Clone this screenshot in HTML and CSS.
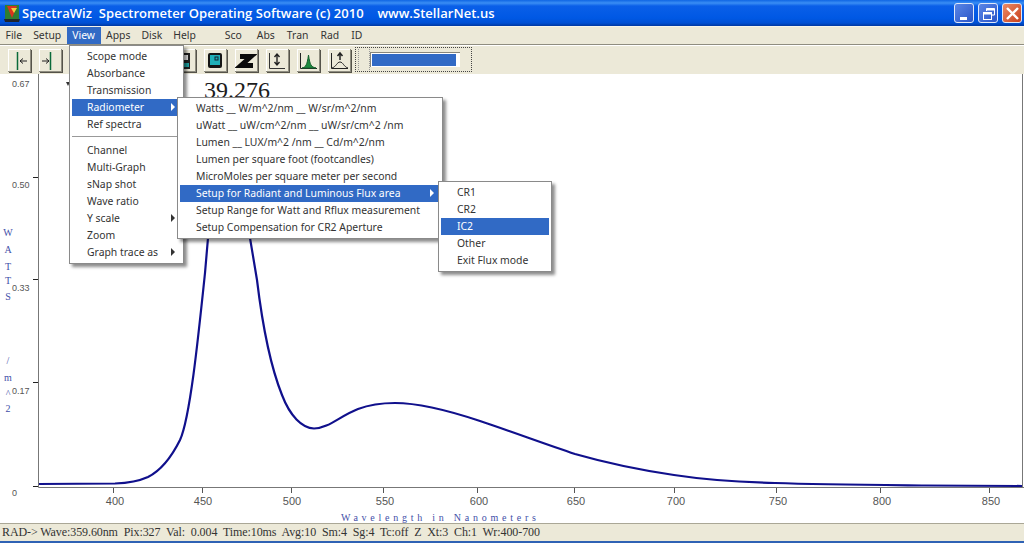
FILE: index.html
```html
<!doctype html>
<html lang="en">
    <head>
        <meta charset="utf-8">
        <meta name="viewport" content="width=device-width, initial-scale=1">
        <title>SpectraWiz</title>
        <link rel="stylesheet" href="styles.css">
    </head>
    <body>
        <div class="window">
            <header class="titlebar">
                <svg class="app-icon" width="18" height="19" viewBox="0 0 18 19">
                    <rect x="2" y="1" width="14" height="14" fill="#2f7d32"/>
                    <path d="M4 2 L14 2 L9 14 Z" fill="#d8331f"/>
                    <path d="M8 4 L14 4 L11 9 Z" fill="#f0d040"/>
                    <path d="M1 15 L17 15 L16 18 L2 18 Z" fill="#20242c"/>
                </svg>
                <span class="title-text">SpectraWiz  Spectrometer Operating Software (c) 2010    www.StellarNet.us</span>
                <div class="win-buttons">
                    <button class="win-btn">
                        <svg width="19" height="19" viewBox="0 0 19 19"><rect x="5" y="13" width="7" height="3" fill="#fff"/></svg>
                    </button>
                    <button class="win-btn">
                        <svg width="19" height="19" viewBox="0 0 19 19" fill="none" stroke="#fff" stroke-width="1"><path d="M7.5 7 V4.5 H15.5 V11 H13"/><path d="M7.5 5.5 H15.5" stroke-width="2"/><rect x="4.5" y="8.5" width="8" height="7"/><path d="M4.5 9.5 H12.5" stroke-width="2"/></svg>
                    </button>
                    <button class="win-btn close">
                        <svg width="19" height="19" viewBox="0 0 19 19" stroke="#fff" stroke-width="2.4"><path d="M4 4 L15 15 M15 4 L4 15"/></svg>
                    </button>
                </div>
            </header>

            <nav class="menubar">
                <span class="top-item">File</span>
                <span class="top-item">Setup</span>
                <span class="top-item active">View</span>
                <span class="top-item">Apps</span>
                <span class="top-item">Disk</span>
                <span class="top-item">Help</span>
                <span class="top-item sco">Sco</span>
                <span class="top-item">Abs</span>
                <span class="top-item">Tran</span>
                <span class="top-item">Rad</span>
                <span class="top-item">ID</span>
            </nav>

            <div class="toolbar">
                <button class="tool">
                    <svg width="22" height="22" viewBox="0 0 22 22" fill="none"><path d="M9.5 2 V20" stroke="#0a6a3a" stroke-width="1.5"/><path d="M19 11 H12 M15 8.5 L12 11 L15 13.5" stroke="#222"/></svg>
                </button>
                <button class="tool">
                    <svg width="22" height="22" viewBox="0 0 22 22" fill="none"><path d="M11.5 2 V20" stroke="#0a6a3a" stroke-width="1.5"/><path d="M3 11 H10 M7 8.5 L10 11 L7 13.5" stroke="#222"/></svg>
                </button>
                <button class="tool push">
                    <svg width="22" height="22" viewBox="0 0 22 22"><rect x="7" y="3" width="10" height="16" fill="#222"/><rect x="9" y="5" width="6" height="5" fill="#eee"/><rect x="8" y="13" width="8" height="4" fill="#2aa"/></svg>
                </button>
                <button class="tool">
                    <svg width="22" height="22" viewBox="0 0 22 22"><rect x="4" y="3" width="14" height="15" rx="2" fill="#151515"/><rect x="6" y="5" width="10" height="10" fill="#1fb0b8"/><rect x="11" y="7" width="3" height="3" fill="none" stroke="#123"/></svg>
                </button>
                <button class="tool">
                    <svg width="22" height="22" viewBox="0 0 22 22" fill="none" stroke="#0b0b0b" stroke-width="5"><path d="M5 6.5 H16 L6 15.5 H18"/></svg>
                </button>
                <button class="tool">
                    <svg width="22" height="22" viewBox="0 0 22 22" fill="none" stroke="#222"><path d="M3.5 3 V18.5 H19" stroke="#333"/><path d="M11 4 V15 M8.5 7 L11 4 L13.5 7 M8.5 12 L11 15 L13.5 12" stroke-width="1.4"/></svg>
                </button>
                <button class="tool">
                    <svg width="22" height="22" viewBox="0 0 22 22" fill="none"><path d="M3.5 3 V18.5 H20" stroke="#222"/><path d="M5 18 C9 17 10 15 11.5 5 C13 15 14 17 19 18 Z" fill="#1c8a3e" stroke="#14602c"/></svg>
                </button>
                <button class="tool">
                    <svg width="22" height="22" viewBox="0 0 22 22" fill="none" stroke="#222"><path d="M3.5 3 V18.5 H20"/><path d="M4 18 C8 17 9 12 12 12 C15 12 16 17 20 18"/><path d="M12 3 V10 M9.5 6 L12 3 L14.5 6" stroke-width="1.5"/></svg>
                </button>
                <div class="progress-band">
                    <span class="grip"></span>
                    <div class="progress-track"><div class="progress-fill"></div></div>
                </div>
            </div>

            <main class="plot">
                <svg class="chart" width="1024" height="449" viewBox="0 74 1024 449">
                    <g fill="none" stroke="#777" stroke-width="1">
                        <path d="M38.5 74 V487.5 H1024"/>
                        <path d="M1022.5 74 V487"/>
                    </g>
                    <path d="M33 177.5 H38 M33 279.5 H38 M33 382.5 H38 M33 486.5 H38" stroke="#222" fill="none"/>
                    <path d="M113.5 488 V493 M202.5 488 V493 M291.5 488 V493 M383.5 488 V493 M477.5 488 V493 M574.5 488 V493 M674.5 488 V493 M776.5 488 V493 M880.5 488 V493 M989.5 488 V493" stroke="#555" fill="none"/>
                    <path d="M66 82 L70 82 L68 86 Z" fill="#333"/>

                    <g class="y-label">
                        <text x="12" y="87">0.67</text>
                        <text x="12" y="188">0.50</text>
                        <text x="12" y="291">0.33</text>
                        <text x="12" y="394">0.17</text>
                        <text x="12" y="496">0</text>
                    </g>
                    <g class="x-label" text-anchor="middle">
                        <text x="115" y="505">400</text>
                        <text x="203" y="505">450</text>
                        <text x="292" y="505">500</text>
                        <text x="385" y="505">550</text>
                        <text x="479" y="505">600</text>
                        <text x="576" y="505">650</text>
                        <text x="676" y="505">700</text>
                        <text x="778" y="505">750</text>
                        <text x="882" y="505">800</text>
                        <text x="991" y="505">850</text>
                    </g>
                    <g class="axis-title" text-anchor="middle">
                        <text x="8" y="236">W</text>
                        <text x="8" y="253">A</text>
                        <text x="8" y="270">T</text>
                        <text x="8" y="284">T</text>
                        <text x="8" y="300">S</text>
                        <text x="8" y="364">/</text>
                        <text x="8" y="381">m</text>
                        <text x="8" y="397">^</text>
                        <text x="8" y="412">2</text>
                    </g>
                    <text class="axis-title wide" x="341" y="521">Wavelength in Nanometers</text>

                    <text class="reading" x="204" y="98">39.276</text>

                    <path class="trace" d="M39 484 L115 483.5 C128 483 138 481.5 148 477 C158 472 170 460 180 440 C190 418 198 340 205 273 L208 238 L218 120 L250 238 L257 280 C263 330 270 365 282 395 C290 416 302 428 314 428.5 C328 428.5 340 416 358 409 C370 404.5 382 403 395 403 C420 403 450 411 480 421 C510 431 545 444 575 454 C610 464 640 470 674 475 C700 479 735 482 775 483 C820 484.5 880 485 925 485.5 L1022 486"/>
                </svg>
            </main>

            <footer class="statusbar">
                <span class="status-text">RAD-&gt; Wave:359.60nm  Pix:327  Val:  0.004  Time:10ms  Avg:10  Sm:4  Sg:4  Tc:off  Z  Xt:3  Ch:1  Wr:400-700</span>
            </footer>
            <div class="bottom-edge"></div>
        </div>

        <div class="menu view-menu">
            <div class="item">Scope mode</div>
            <div class="item">Absorbance</div>
            <div class="item">Transmission</div>
            <div class="item selected has-sub">Radiometer</div>
            <div class="item">Ref spectra</div>
            <div class="separator"></div>
            <div class="item">Channel</div>
            <div class="item">Multi-Graph</div>
            <div class="item">sNap shot</div>
            <div class="item">Wave ratio</div>
            <div class="item has-sub">Y scale</div>
            <div class="item">Zoom</div>
            <div class="item has-sub">Graph trace as</div>
        </div>

        <div class="menu radio-menu">
            <div class="item">Watts __ W/m^2/nm __ W/sr/m^2/nm</div>
            <div class="item">uWatt __ uW/cm^2/nm __ uW/sr/cm^2 /nm</div>
            <div class="item">Lumen __ LUX/m^2 /nm __ Cd/m^2/nm</div>
            <div class="item">Lumen per square foot (footcandles)</div>
            <div class="item">MicroMoles per square meter per second</div>
            <div class="item selected has-sub">Setup for Radiant and Luminous Flux area</div>
            <div class="item">Setup Range for Watt and Rflux measurement</div>
            <div class="item">Setup Compensation for CR2 Aperture</div>
        </div>

        <div class="menu flux-menu">
            <div class="item">CR1</div>
            <div class="item">CR2</div>
            <div class="item selected">IC2</div>
            <div class="item">Other</div>
            <div class="item">Exit Flux mode</div>
        </div>
    </body>
</html>
```

FILE: styles.css
```css
html {
    font-size: 10.4px;
    font-family: "Noto Sans", sans-serif;
}
body {
    margin: 0;
    width: 1024px;
    height: 543px;
    overflow: hidden;
    color: #333;
    background-color: #ece9d8;
}
.window {
    display: flex;
    flex-direction: column;
    height: 543px;
}

.titlebar {
    display: flex;
    align-items: center;
    height: 26px;
    padding: 0 2px 0 3px;
    box-sizing: border-box;
    background: linear-gradient(#0f66e4 0, #3a8ef4 3px, #0a5fe8 6px, #0058e4 18px, #0050d4 23px, #0038a0 26px);
}
.app-icon {
    flex-shrink: 0;
}
.title-text {
    margin-left: 1px;
    color: #fff;
    font-family: "Open Sans", sans-serif;
    font-size: 13px;
    font-weight: 600;
    letter-spacing: 0.04px;
    white-space: pre;
}
.win-buttons {
    display: flex;
    gap: 4px;
    margin-left: auto;
}
.win-btn {
    width: 20px;
    height: 20px;
    padding: 0;
    border: 1px solid #dfe8fa;
    border-radius: 3px;
    background: linear-gradient(135deg, #5a86e6, #2a55c8);
}
.win-btn svg {
    display: block;
}
.win-btn.close {
    background: linear-gradient(135deg, #ec8a66, #c8401c);
}

.menubar {
    display: flex;
    align-items: center;
    height: 19px;
    box-sizing: border-box;
    border-top: 1px solid #f6f4ea;
    border-bottom: 1px solid #8f8d80;
}
.top-item {
    padding: 0 5.5px;
    line-height: 17px;
}
.top-item.active {
    background-color: #316ac5;
    color: #fff;
}
.top-item.sco {
    margin-left: 18px;
    margin-right: 4px;
}
.top-item:nth-child(n+8) {
    margin-right: 1px;
}

.toolbar {
    display: flex;
    align-items: flex-start;
    height: 29px;
    box-sizing: border-box;
    padding: 3px 0 0 8px;
    gap: 8px;
    border-top: 1px solid #fff;
}
.tool {
    width: 23px;
    height: 23px;
    padding: 0;
    border: 0;
    background-color: #ece9d8;
    box-shadow: inset -1px -1px 0 #8f8d80, inset 1px 1px 0 #fff, 1px 1px 0 #55534a;
}
.tool svg {
    display: block;
}
.push {
    margin-left: 103px;
}
.progress-band {
    display: flex;
    align-items: center;
    width: 117px;
    height: 25px;
    margin: -2px 0 0 -4px;
    box-sizing: border-box;
    border: 1px dotted #444;
}
.grip {
    width: 10px;
    height: 21px;
    margin-left: 2px;
    border-left: 1px dotted #999;
    border-right: 1px dotted #999;
}
.progress-track {
    width: 90px;
    height: 15px;
    padding: 1px 4px 1px 1px;
    box-sizing: border-box;
    border-top: 1px solid #88867a;
    border-left: 1px solid #88867a;
    background-color: #fff;
}
.progress-fill {
    height: 100%;
    background-color: #316ac5;
}

.plot {
    flex: 1;
    background-color: #fff;
}
.chart {
    display: block;
}
.trace {
    fill: none;
    stroke: #10108c;
    stroke-width: 2.2;
}
.y-label text,
.x-label text {
    font-family: "Liberation Sans", sans-serif;
    fill: #555;
}
.y-label text {
    font-size: 9px;
}
.x-label text {
    font-size: 11px;
}
.axis-title text,
.axis-title.wide {
    font-family: "Liberation Serif", serif;
    font-size: 10px;
    fill: #3f4fa8;
}
.axis-title.wide {
    letter-spacing: 3.75px;
}
.reading {
    font-family: "Liberation Serif", serif;
    font-size: 24px;
    fill: #1c1c1c;
}

.statusbar {
    display: flex;
    align-items: center;
    height: 18px;
    padding-left: 2px;
    box-sizing: border-box;
    border-top: 1px solid #aaa796;
}
.status-text {
    font-family: "Liberation Serif", serif;
    font-size: 12px;
    letter-spacing: -0.09px;
    white-space: pre;
}
.bottom-edge {
    height: 2px;
    background-color: #2f62b4;
}

.menu {
    position: absolute;
    box-sizing: border-box;
    padding: 2px;
    border: 1px solid #8a8a8a;
    background-color: #fff;
    box-shadow: 3px 3px 3px rgba(0, 0, 0, 0.45);
}
.view-menu {
    left: 69px;
    top: 45px;
    width: 115px;
}
.radio-menu {
    left: 177px;
    top: 97px;
    width: 266px;
}
.flux-menu {
    left: 438px;
    top: 181px;
    width: 114px;
}
.item {
    position: relative;
    height: 17px;
    padding-left: 15px;
    line-height: 16px;
    white-space: nowrap;
}
.radio-menu .item,
.flux-menu .item {
    padding-left: 16px;
}
.item.selected {
    background-color: #316ac5;
    color: #fff;
}
.item.has-sub::after {
    content: "";
    position: absolute;
    right: 6px;
    top: 4px;
    border-left: 4px solid currentColor;
    border-top: 4px solid transparent;
    border-bottom: 4px solid transparent;
}
.separator {
    height: 1px;
    margin: 3px 0 5px;
    background-color: #999;
}
```
